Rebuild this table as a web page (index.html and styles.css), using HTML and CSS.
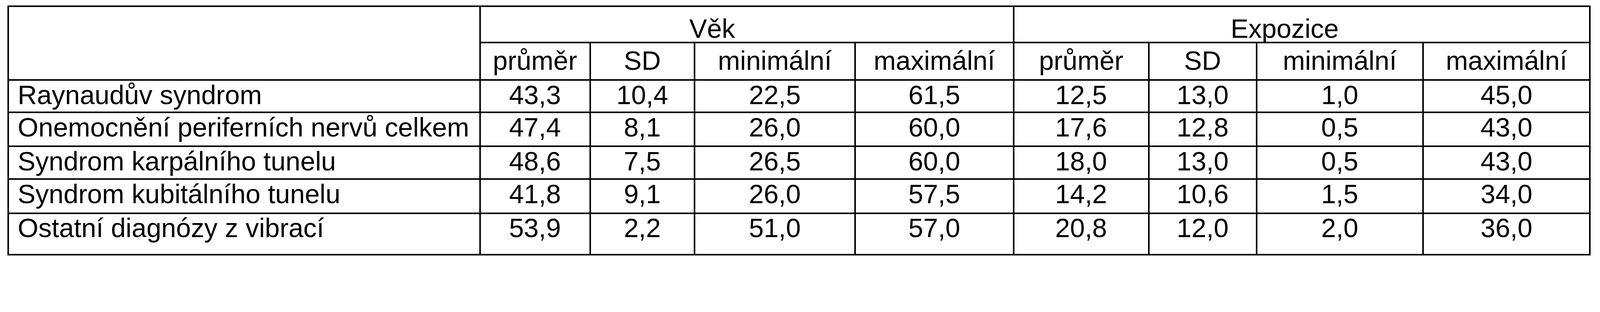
FILE: index.html
```html
<!DOCTYPE html>
<html lang="cs">
<head>
<meta charset="utf-8">
<title>Tabulka</title>
<link rel="stylesheet" href="styles.css">
</head>
<body>
<table class="stats">
  <colgroup>
    <col class="c0"><col class="c1"><col class="c2"><col class="c3"><col class="c4">
    <col class="c5"><col class="c6"><col class="c7"><col class="c8">
  </colgroup>
  <thead>
    <tr class="r-group">
      <th class="blank" rowspan="2"></th>
      <th class="group vek" colspan="4">Věk</th>
      <th class="group expo" colspan="4">Expozice</th>
    </tr>
    <tr class="r-sub">
      <th>průměr</th><th>SD</th><th>minimální</th><th>maximální</th>
      <th>průměr</th><th>SD</th><th>minimální</th><th>maximální</th>
    </tr>
  </thead>
  <tbody>
    <tr class="r1">
      <td class="label">Raynaudův syndrom</td>
      <td>43,3</td><td>10,4</td><td>22,5</td><td>61,5</td>
      <td>12,5</td><td>13,0</td><td>1,0</td><td>45,0</td>
    </tr>
    <tr class="r2">
      <td class="label">Onemocnění periferních nervů celkem</td>
      <td>47,4</td><td>8,1</td><td>26,0</td><td>60,0</td>
      <td>17,6</td><td>12,8</td><td>0,5</td><td>43,0</td>
    </tr>
    <tr class="r3">
      <td class="label">Syndrom karpálního tunelu</td>
      <td>48,6</td><td>7,5</td><td>26,5</td><td>60,0</td>
      <td>18,0</td><td>13,0</td><td>0,5</td><td>43,0</td>
    </tr>
    <tr class="r4">
      <td class="label">Syndrom kubitálního tunelu</td>
      <td>41,8</td><td>9,1</td><td>26,0</td><td>57,5</td>
      <td>14,2</td><td>10,6</td><td>1,5</td><td>34,0</td>
    </tr>
    <tr class="r5">
      <td class="label">Ostatní diagnózy z vibrací</td>
      <td>53,9</td><td>2,2</td><td>51,0</td><td>57,0</td>
      <td>20,8</td><td>12,0</td><td>2,0</td><td>36,0</td>
    </tr>
  </tbody>
</table>
</body>
</html>
```
FILE: styles.css
```css
/* one unit = one pixel of the 4866px wide frame */
:root {
  --u: calc(100vw / 4866);
}

html, body {
  margin: 0;
  padding: 0;
  background: #fff;
  overflow: hidden;
}

body {
  font-family: "Liberation Sans", Arial, sans-serif;
  color: #000;
}

.stats {
  margin: calc(17 * var(--u)) 0 0 calc(22 * var(--u));
  border-collapse: separate;
  border-spacing: 0;
  table-layout: fixed;
  width: calc(4816 * var(--u));
  border-top: calc(5 * var(--u)) solid #000;
  border-left: calc(5 * var(--u)) solid #000;
  font-size: calc(81 * var(--u));
  line-height: 1;
}

.c0 { width: calc(1435 * var(--u)); }
.c1 { width: calc(335 * var(--u)); }
.c2 { width: calc(318 * var(--u)); }
.c3 { width: calc(488 * var(--u)); }
.c4 { width: calc(482 * var(--u)); }
.c5 { width: calc(411 * var(--u)); }
.c6 { width: calc(328 * var(--u)); }
.c7 { width: calc(506 * var(--u)); }
.c8 { width: calc(508 * var(--u)); }

.stats th,
.stats td {
  box-sizing: border-box;
  border-right: calc(5 * var(--u)) solid #000;
  border-bottom: calc(5 * var(--u)) solid #000;
  padding: 0;
  font-weight: normal;
  text-align: center;
  white-space: nowrap;
}

.r-group { height: calc(110 * var(--u)); }
.r-sub { height: calc(114 * var(--u)); }
.r1 { height: calc(99 * var(--u)); }
.r2 { height: calc(103 * var(--u)); }
.r3 { height: calc(100 * var(--u)); }
.r4 { height: calc(104 * var(--u)); }
.r5 { height: calc(126 * var(--u)); }

.stats th.group {
  vertical-align: bottom;
}

.stats th.vek { padding-right: calc(210 * var(--u)); }
.stats th.expo { padding-right: calc(104 * var(--u)); }

.stats .r-sub th {
  vertical-align: top;
  padding-top: calc(12 * var(--u));
}

.stats td {
  vertical-align: top;
  padding-top: calc(2 * var(--u));
}

.stats td.label {
  text-align: left;
  padding-left: calc(27 * var(--u));
}
```
